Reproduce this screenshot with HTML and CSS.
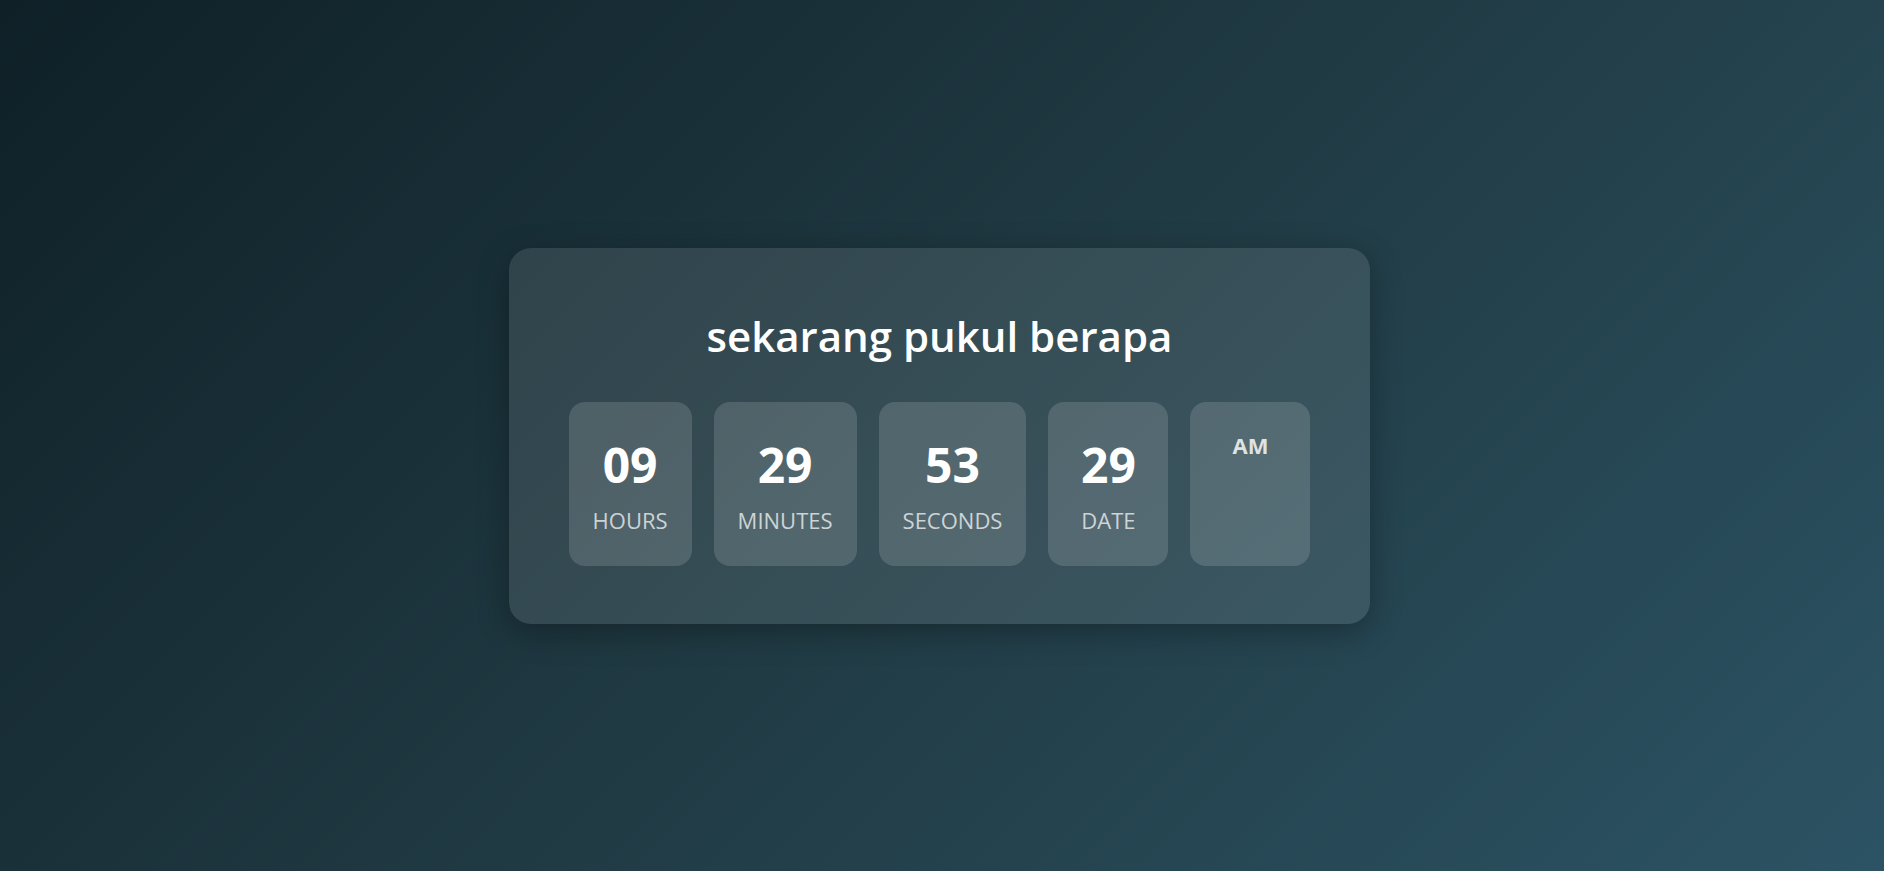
FILE: index.html
```html
<!DOCTYPE html>
<html lang="id">
<head>
<meta charset="utf-8">
<title>sekarang pukul berapa</title>
<link rel="stylesheet" href="styles.css">
</head>
<body>
<main class="page">
  <section class="card">
    <h1 class="title">sekarang pukul berapa</h1>
    <div class="row">
      <div class="unit">
        <span class="num">09</span>
        <span class="label">HOURS</span>
      </div>
      <div class="unit">
        <span class="num">29</span>
        <span class="label">MINUTES</span>
      </div>
      <div class="unit">
        <span class="num">53</span>
        <span class="label">SECONDS</span>
      </div>
      <div class="unit">
        <span class="num">29</span>
        <span class="label">DATE</span>
      </div>
      <div class="unit">
        <span class="ampm">AM</span>
      </div>
    </div>
  </section>
</main>
</body>
</html>
```
FILE: styles.css
```css
* { box-sizing: border-box; }
html, body { margin: 0; padding: 0; height: 100%; }
body {
  font-family: "Open Sans", "Noto Sans", sans-serif;
  background: linear-gradient(135deg, #0f2027 0%, #203a43 50%, #2c5364 100%);
  color: #fff;
}
.page {
  height: 100vh;
  padding-right: 5px;
  display: flex;
  align-items: center;
  justify-content: center;
}
.card {
  width: 861px;
  padding: 63px 60px 58px;
  border-radius: 22px;
  background: rgba(255, 255, 255, 0.1);
  box-shadow: 0 8px 32px rgba(0, 0, 0, 0.3);
  display: flex;
  flex-direction: column;
  align-items: center;
}
.title {
  margin: 0 0 41px;
  font-size: 42px;
  line-height: 50px;
  font-weight: 600;
  color: #fff;
  text-align: center;
}
.row {
  display: flex;
  gap: 22px;
  justify-content: center;
}
.unit {
  min-width: 120px;
  padding: 35px 24px 32px;
  border-radius: 16px;
  background: rgba(255, 255, 255, 0.14);
  display: flex;
  flex-direction: column;
  align-items: center;
}
.num {
  font-size: 48px;
  line-height: 56px;
  font-weight: 700;
  color: #fff;
}
.label {
  margin-top: 13px;
  font-size: 22px;
  line-height: 28px;
  color: rgba(255, 255, 255, 0.72);
}
.ampm {
  font-size: 22px;
  line-height: 17px;
  font-weight: 700;
  color: rgba(255, 255, 255, 0.82);
}
```
